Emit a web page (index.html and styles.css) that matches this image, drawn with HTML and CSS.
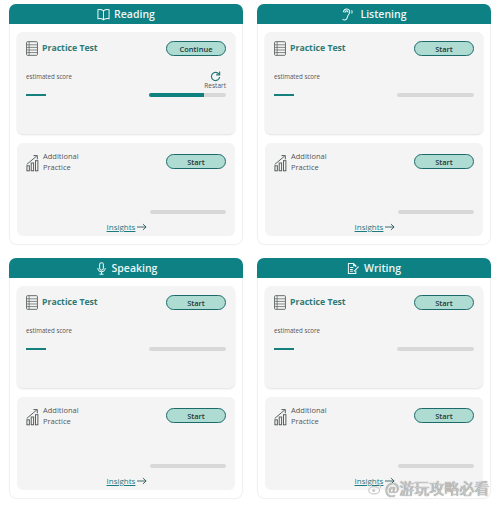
FILE: index.html
```html
<!DOCTYPE html>
<html lang="en">
<head>
<meta charset="utf-8">
<title>Modules</title>
<link rel="stylesheet" href="styles.css">
</head>
<body>
<svg class="defs" width="0" height="0" aria-hidden="true">
  <symbol id="doc" viewBox="0 0 13 16"><rect x="0.6" y="0.6" width="11.8" height="14.8" rx="1" fill="none" stroke="currentColor" stroke-width="1"/><path d="M0.6 4h11.8M0.6 6.8h11.8M0.6 9.6h11.8M0.6 12.400h11.8M3.400 0.6v14.8" fill="none" stroke="currentColor" stroke-width="0.8"/></symbol>
  <symbol id="chart" viewBox="0 0 14 18"><path d="M0.8 10.500 L11.500 1.500M8 1h4.200v4" fill="none" stroke="currentColor" stroke-width="1"/><rect x="1" y="12" width="2.600" height="5.400" fill="none" stroke="currentColor"/><rect x="5.600" y="9" width="2.600" height="8.400" fill="none" stroke="currentColor"/><rect x="10.200" y="6.500" width="2.600" height="10.900" fill="none" stroke="currentColor"/></symbol>
  <symbol id="arrow" viewBox="0 0 11 8"><path d="M0 4h10M6.500 0.800 10 4 6.500 7.200" fill="none" stroke="currentColor" stroke-width="1"/></symbol>
</svg>
<main class="grid">
  <section class="card">
    <h2 class="head"><svg class="hicon" viewBox="0 0 14 13"><path d="M7 2.500C5.500 1.300 3.300 1 1 1.300V11c2.300-.3 4.500 0 6 1.200 1.500-1.200 3.700-1.500 6-1.200V1.300C10.700 1 8.500 1.300 7 2.500zM7 2.500V12.200" fill="none" stroke="currentColor" stroke-width="1.100"/></svg>Reading</h2>
    <div class="panel test">
      <div class="row"><svg class="doc"><use href="#doc"/></svg><span class="title">Practice Test</span><button class="btn">Continue</button></div>
      <div class="score">
        <div class="labels"><span class="est">estimated score</span><span class="restart"><svg class="reload" viewBox="0 0 12 12"><path d="M9.800 3.500A4.500 4.500 0 1 0 10.500 6.500" fill="none" stroke="currentColor" stroke-width="1.300"/><path d="M10.500 0.500v3.800H6.700" fill="none" stroke="currentColor" stroke-width="1.300"/></svg>Restart</span></div>
        <div class="bars"><i class="dash"></i><div class="track"><div class="fill" style="width:72%"></div></div></div>
      </div>
    </div>
    <div class="panel extra">
      <div class="row"><svg class="chart"><use href="#chart"/></svg><span class="add">Additional<br>Practice</span><button class="btn">Start</button></div>
      <div class="track low"></div>
      <a class="ins" href="#"><u>Insights</u><svg class="arrow"><use href="#arrow"/></svg></a>
    </div>
  </section>
  <section class="card">
    <h2 class="head"><svg class="hicon ear" viewBox="0 0 14 14"><path d="M2.500 4.500C3 2 4.800.8 6.500 1c2 .2 3.200 1.800 2.900 3.800-.2 1.700-1.700 2.400-2.200 4C6.700 10.800 6 13 4 13c-1 0-1.800-.5-2.200-1.200M4.300 5c0-1.300 1-2 2-1.900 1 .1 1.400 1 1.200 1.900M11.500 2.500c.6 1 .6 2.500 0 3.500" fill="none" stroke="currentColor" stroke-width="1.100"/></svg>Listening</h2>
    <div class="panel test">
      <div class="row"><svg class="doc"><use href="#doc"/></svg><span class="title">Practice Test</span><button class="btn">Start</button></div>
      <div class="score">
        <div class="labels"><span class="est">estimated score</span></div>
        <div class="bars"><i class="dash"></i><div class="track"></div></div>
      </div>
    </div>
    <div class="panel extra">
      <div class="row"><svg class="chart"><use href="#chart"/></svg><span class="add">Additional<br>Practice</span><button class="btn">Start</button></div>
      <div class="track low"></div>
      <a class="ins" href="#"><u>Insights</u><svg class="arrow"><use href="#arrow"/></svg></a>
    </div>
  </section>
  <section class="card">
    <h2 class="head"><svg class="hicon" viewBox="0 0 14 14"><rect x="5" y="0.800" width="4" height="8" rx="2" fill="none" stroke="currentColor" stroke-width="1.100"/><path d="M3 6.500a4 4 0 0 0 8 0M7 10.500v2.700M4.800 13.300h4.400" fill="none" stroke="currentColor" stroke-width="1.100"/></svg>Speaking</h2>
    <div class="panel test">
      <div class="row"><svg class="doc"><use href="#doc"/></svg><span class="title">Practice Test</span><button class="btn">Start</button></div>
      <div class="score">
        <div class="labels"><span class="est">estimated score</span></div>
        <div class="bars"><i class="dash"></i><div class="track"></div></div>
      </div>
    </div>
    <div class="panel extra">
      <div class="row"><svg class="chart"><use href="#chart"/></svg><span class="add">Additional<br>Practice</span><button class="btn">Start</button></div>
      <div class="track low"></div>
      <a class="ins" href="#"><u>Insights</u><svg class="arrow"><use href="#arrow"/></svg></a>
    </div>
  </section>
  <section class="card">
    <h2 class="head"><svg class="hicon" viewBox="0 0 14 14"><path d="M9.500 9.500V12.500H1.500V1.500H7l2.500 2.500V5.500M7 1.500V4h2.500M3.300 6h3.500M3.300 8h3M3.300 10h3M7.500 10l5-5" fill="none" stroke="currentColor" stroke-width="1.100"/></svg>Writing</h2>
    <div class="panel test">
      <div class="row"><svg class="doc"><use href="#doc"/></svg><span class="title">Practice Test</span><button class="btn">Start</button></div>
      <div class="score">
        <div class="labels"><span class="est">estimated score</span></div>
        <div class="bars"><i class="dash"></i><div class="track"></div></div>
      </div>
    </div>
    <div class="panel extra">
      <div class="row"><svg class="chart"><use href="#chart"/></svg><span class="add">Additional<br>Practice</span><button class="btn">Start</button></div>
      <div class="track low"></div>
      <a class="ins" href="#"><u>Insights</u><svg class="arrow"><use href="#arrow"/></svg></a>
    </div>
  </section>
</main>
<div class="mark"><svg class="wb" viewBox="0 0 16 14"><ellipse cx="7" cy="9" rx="6.200" ry="4.200" fill="none" stroke="currentColor" stroke-width="1.300"/><circle cx="6.500" cy="9.300" r="1.800" fill="currentColor"/><path d="M10 2c2.500-.5 4.800 1.500 4.300 4.500" fill="none" stroke="currentColor" stroke-width="1.300"/></svg>@游玩攻略必看</div>
</body>
</html>
```
FILE: styles.css
```css
* {
  box-sizing: border-box;
}

html,
body {
  margin: 0;
  height: 506px;
  overflow: hidden;
  background: #fff;
}

body {
  position: relative;
  padding: 4px 9px 0;
  font-family: "Open Sans", "Noto Sans", sans-serif;
}

.defs {
  position: absolute;
}

.grid {
  display: grid;
  grid-template-columns: 234px 234px;
  grid-auto-rows: 241px;
  column-gap: 14px;
  row-gap: 13px;
}

.card {
  display: flex;
  flex-direction: column;
  border: 1px solid #f0f0f0;
  border-top: 0;
  border-radius: 8px;
  box-shadow: 0 0 2px rgba(0, 0, 0, 0.03);
}

.head {
  display: flex;
  align-items: center;
  justify-content: center;
  gap: 4px;
  height: 20px;
  margin: 0 -1px;
  border-radius: 7px 7px 0 0;
  background: #0d8184;
  color: #eef7f7;
  font-size: 10.500px;
  font-weight: 600;
  line-height: 20px;
}

.hicon {
  width: 13px;
  height: 13px;
}

.ear {
  margin-right: 2px;
}

.panel {
  display: flex;
  flex-direction: column;
  margin: 0 7px;
  padding: 9px 9px 0;
  border-radius: 6px;
  background: #f4f4f5;
}

.test {
  height: 102px;
  margin-top: 8px;
  box-shadow: 0 1px 2px rgba(0, 0, 0, 0.12);
}

.extra {
  height: 93px;
  margin-top: 9px;
  padding-top: 11px;
}

.row {
  display: flex;
  align-items: flex-start;
}

.doc {
  flex: none;
  width: 12px;
  height: 15px;
  margin-right: 4px;
  color: #5c6563;
}

.chart {
  flex: none;
  width: 13px;
  height: 18px;
  margin-right: 4px;
  color: #4d5654;
}

.title {
  flex: 1;
  color: #2e7a74;
  font-size: 8.700px;
  font-weight: 700;
  line-height: 15px;
}

.add {
  flex: 1;
  margin-top: -3px;
  color: #555;
  font-size: 7.500px;
  line-height: 10.500px;
}

.btn {
  flex: none;
  width: 60px;
  height: 15px;
  padding: 0;
  border: 1.200px solid #1d6a6a;
  border-radius: 8px;
  background: #aedcd3;
  color: #1f3a38;
  font-family: inherit;
  font-size: 7.500px;
  font-weight: 600;
  line-height: 12px;
}

.score {
  margin-top: 15px;
}

.labels {
  display: flex;
  align-items: flex-start;
  justify-content: space-between;
  height: 22px;
}

.est {
  margin-top: 2px;
  color: #555;
  font-size: 6.200px;
  line-height: 8px;
}

.restart {
  display: flex;
  flex-direction: column;
  align-items: flex-end;
  color: #555;
  font-size: 6.500px;
  line-height: 8px;
}

.reload {
  width: 11px;
  height: 11px;
  margin-right: 5px;
  color: #277a78;
}

.bars {
  display: flex;
  align-items: center;
  justify-content: space-between;
  height: 4px;
}

.dash {
  width: 20px;
  height: 2px;
  background: #16807f;
}

.track {
  width: 77px;
  height: 4px;
  border-radius: 2px;
  background: #d8d8d8;
  overflow: hidden;
}

.fill {
  height: 100%;
  background: #0f8280;
}

.low {
  align-self: flex-end;
  width: 76px;
  margin-top: 38px;
}

.ins {
  display: flex;
  align-items: center;
  align-self: center;
  gap: 2px;
  margin-top: 7px;
  padding-left: 2px;
  color: #1d7a80;
  font-size: 8px;
  font-weight: 400;
  line-height: 11px;
  text-decoration: none;
}

.arrow {
  width: 10px;
  height: 8px;
  color: #2c5a5a;
}

.mark {
  position: absolute;
  left: 368px;
  top: 478px;
  display: flex;
  align-items: center;
  gap: 3px;
  color: #c9c9c9;
  font-family: "Noto Sans CJK SC", sans-serif;
  font-size: 15px;
  line-height: 20px;
  text-shadow: 0 0 1px #555;
}

.wb {
  width: 14px;
  height: 13px;
}
```
